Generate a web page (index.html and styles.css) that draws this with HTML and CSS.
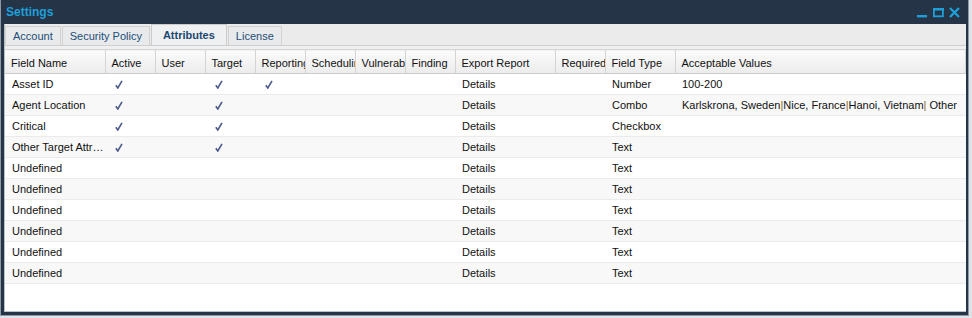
FILE: index.html
```html
<!DOCTYPE html>
<html lang="en">
<head>
  <meta charset="UTF-8" />
  <title>Settings</title>
  <link rel="stylesheet" href="styles.css">
</head>
<body>

<div class="window">
  <div class="titlebar">
    <span class="title">Settings</span>
    <div class="controls">
      <svg width="11" height="11" viewBox="0 0 11 11"><rect x="0" y="8" width="10" height="2.4" fill="#1e9fd9"/></svg>
      <svg width="11" height="11" viewBox="0 0 11 11"><rect x="0.9" y="1.9" width="9" height="7.4" fill="none" stroke="#1e9fd9" stroke-width="1.8"/><rect x="0" y="1" width="11" height="2.5" fill="#1e9fd9"/></svg>
      <svg width="11" height="11" viewBox="0 0 11 11"><path d="M1 1 L10 10 M10 1 L1 10" stroke="#1e9fd9" stroke-width="2.3"/></svg>
    </div>
  </div>

  <div class="panel">
    <div class="tabs">
      <div class="tab">Account</div>
      <div class="tab">Security Policy</div>
      <div class="tab active">Attributes</div>
      <div class="tab">License</div>
    </div>

    <div class="grid">
      <table>
        <colgroup>
          <col class="w100"><col class="w50"><col class="w50"><col class="w50"><col class="w50"><col class="w50">
          <col class="w50"><col class="w50"><col class="w100"><col class="w50"><col class="w70"><col>
        </colgroup>
        <thead>
          <tr>
            <th>Field Name</th><th>Active</th><th>User</th><th>Target</th><th>Reporting</th><th>Scheduling</th>
            <th>Vulnerability</th><th>Finding</th><th>Export Report</th><th>Required</th><th>Field Type</th><th>Acceptable Values</th>
          </tr>
        </thead>
        <tbody id="rows"></tbody>
      </table>
    </div>
  </div>
</div>

<script>
  const check = '<svg class="check" width="8" height="9" viewBox="0 0 8 9"><path d="M0.8 5.2 L2.8 8 L7 0.8" fill="none" stroke="#4c5b8e" stroke-width="1.6"/></svg>';

  const rows = [
    { name: "Asset ID", active: 1, target: 1, reporting: 1, type: "Number", values: "100-200" },
    { name: "Agent Location", active: 1, target: 1, type: "Combo",
      values: 'Karlskrona, Sweden<span class="pipe">|</span>Nice, France<span class="pipe">|</span>Hanoi, Vietnam<span class="pipe">|</span> Other' },
    { name: "Critical", active: 1, target: 1, type: "Checkbox" },
    { name: "Other Target Attribute", active: 1, target: 1, type: "Text" }
  ];
  for (let i = 0; i < 6; i++) rows.push({ name: "Undefined", type: "Text" });

  const body = document.getElementById("rows");
  rows.forEach((r) => {
    const tr = document.createElement("tr");
    tr.innerHTML = `
      <td>${r.name}</td>
      <td>${r.active ? check : ""}</td>
      <td></td>
      <td>${r.target ? check : ""}</td>
      <td>${r.reporting ? check : ""}</td>
      <td></td><td></td><td></td>
      <td>Details</td>
      <td></td>
      <td>${r.type}</td>
      <td>${r.values || ""}</td>
    `;
    body.appendChild(tr);
  });
</script>

</body>
</html>
```

FILE: styles.css
```css
:root {
  --frame: #253547;
  --accent: #1e9fd9;
  --text: #111111;
}

body {
  margin: 0;
  padding: 0;
  background-color: #dfe3e8;
  font-family: 'Liberation Sans', Arial, sans-serif;
  font-size: 11px;
  color: var(--text);
}

.window {
  width: 969px;
  height: 316px;
  box-sizing: border-box;
  background-color: var(--frame);
  border: 1px solid #8d99a6;
  border-top: none;
  padding: 0 2px 3px 3px;
  display: flex;
  flex-direction: column;
}

.titlebar {
  height: 24px;
  flex: none;
  display: flex;
  align-items: center;
  justify-content: space-between;
  padding: 0 6px 0 2px;
}

.title {
  font-weight: bold;
  font-size: 12px;
  color: var(--accent);
}

.controls {
  display: flex;
  gap: 5px;
  padding-top: 1px;
}

.panel {
  flex: 1;
  background-color: #ffffff;
  border-left: 1px solid #b9c0c8;
  border-bottom: 1px solid #b9c0c8;
  display: flex;
  flex-direction: column;
}

.tabs {
  height: 22px;
  flex: none;
  box-sizing: border-box;
  background-color: #ebebeb;
  border-bottom: 1px solid #cfcfcf;
  display: flex;
  align-items: flex-end;
}

.tab {
  height: 19px;
  box-sizing: border-box;
  border: 1px solid #d2d2d2;
  border-bottom: none;
  margin-right: 1px;
  padding: 0 7px;
  background-color: #e8eaeb;
  color: #1d4e78;
  display: flex;
  align-items: center;
}

.tab.active {
  background-color: #eef0f1;
  color: #1a4870;
  font-weight: bold;
  height: 21px;
  padding: 0 11px;
  border-color: #cbcbcb;
}

.grid {
  flex: 1;
  border-top: 3px solid #f0f0f0;
  background-color: #ffffff;
}

table {
  width: 100%;
  table-layout: fixed;
  border-collapse: collapse;
}

.w100 { width: 100px; }
.w70 { width: 70px; }
.w50 { width: 50px; }

th, td {
  white-space: nowrap;
  overflow: hidden;
  text-align: left;
  padding: 0 0 0 7px;
}

th {
  height: 21px;
  font-weight: normal;
  text-overflow: clip;
  background: linear-gradient(#fbfbfb, #ececec);
  border-top: 1px solid #d4d4d4;
  border-bottom: 1px solid #cbcbcb;
  border-right: 1px solid #d4d4d4;
  padding: 2px 0 0 6px;
}

td {
  height: 20px;
  text-overflow: ellipsis;
  border-bottom: 1px solid #ebebeb;
}

tbody tr:nth-child(even) td {
  background-color: #f8f8f8;
}

.check {
  display: block;
  margin-left: 3px;
}

.pipe {
  color: #8a6a2e;
}
```
